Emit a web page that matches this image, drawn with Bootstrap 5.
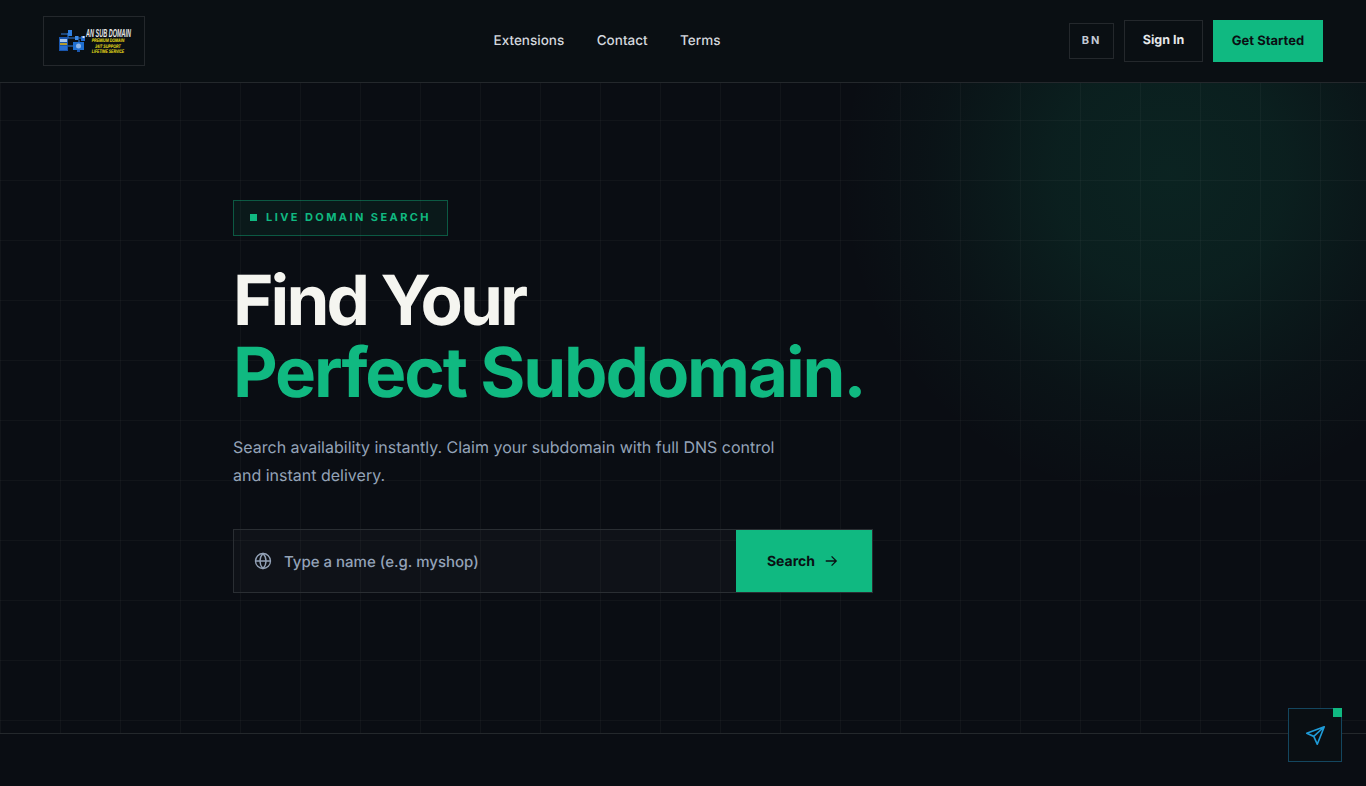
<!DOCTYPE html>
<html lang="en">

<head>
    <meta charset="UTF-8">
    <meta name="viewport" content="width=device-width, initial-scale=1.0">
    <title>AN Sub Domain</title>
    <link href="https://cdn.jsdelivr.net/npm/bootstrap@5.3.0/dist/css/bootstrap.min.css" rel="stylesheet">
    <style>
        body {
            background-color: #0a0d13;
            color: #f4f4ef;
            font-family: Inter, "Liberation Sans", sans-serif;
            text-rendering: geometricPrecision;
            height: 786px;
            overflow: hidden;
        }

        /* Header */
        .site-head {
            height: 83px;
            padding: 0 43px;
            background-color: #0a0f13;
            border-bottom: 1px solid #24282c;
        }

        .logo-box {
            width: 102px;
            height: 50px;
            border: 1px solid #24282c;
        }

        .head-link {
            color: #d4d8de;
            font-size: 13.5px;
            font-weight: 500;
            text-decoration: none;
        }

        .head-links {
            gap: 32.500px;
        }

        .head-actions {
            gap: 10px;
        }

        .lang-btn {
            width: 45px;
            height: 36px;
            padding-bottom: 2px;
            border: 1px solid #24282c;
            color: #c4cad6;
            font-size: 11px;
            font-weight: 700;
            letter-spacing: 2px;
        }

        .signin-btn {
            width: 79px;
            height: 42px;
            padding-top: 1px;
            border: 1px solid #24282c;
            color: #e6e8ea;
            font-size: 12.500px;
            font-weight: 650;
        }

        .start-btn {
            width: 110px;
            height: 42px;
            padding-top: 1px;
            background-color: #10b981;
            color: #0a0f13;
            font-size: 13px;
            font-weight: 650;
        }

        /* Hero */
        .hero-area {
            height: 651px;
            padding-top: 117px;
            background-color: #0a0d13;
            background-image:
                linear-gradient(rgba(255, 255, 255, .032) 1px, transparent 1px),
                linear-gradient(90deg, rgba(255, 255, 255, .032) 1px, transparent 1px),
                radial-gradient(circle 330px at 1170px 90px, rgba(16, 185, 129, .13), rgba(16, 185, 129, .105) 35%, rgba(16, 185, 129, .035) 72%, transparent 100%);
            background-size: 60px 60px, 60px 60px, 100% 100%;
            background-position: 0 -23px, 0 0, 0 0;
            border-bottom: 1px solid #24282c;
        }

        .hero-inner {
            width: 900px;
            margin: 0 auto;
        }

        .live-tag {
            width: 215px;
            height: 36px;
            padding: 0 0 2px 16px;
            gap: 9px;
            background-color: rgba(16, 185, 129, .07);
            border: 1px solid rgba(16, 185, 129, .4);
            color: #10b981;
            font-size: 11px;
            font-weight: 700;
            letter-spacing: 2.42px;
        }

        .live-dot {
            width: 7px;
            height: 7px;
            background-color: #10b981;
        }

        .hero-title {
            margin: 28px 0 0;
            font-family: Inter, "Liberation Sans", sans-serif;
            font-size: 69px;
            font-weight: 700;
            line-height: 72px;
            letter-spacing: -2.9px;
            color: #f5f5f0;
        }

        .hero-title span {
            color: #10b981;
            letter-spacing: -2.1px;
        }

        .hero-sub {
            margin: 25px 0 0;
            color: #94a3b8;
            font-size: 16px;
            line-height: 28px;
        }

        .search-bar {
            width: 640px;
            height: 64px;
            margin-top: 40px;
            background-color: rgba(255, 255, 255, .025);
            border: 1px solid #2a2e33;
        }

        .search-field {
            padding-left: 20px;
            gap: 12px;
            color: #94a3b8;
            font-size: 15px;
            font-weight: 500;
        }

        .search-field span {
            padding-top: 2px;
        }

        .search-btn {
            width: 136px;
            padding-right: 3px;
            background-color: #10b981;
            color: #0a0f13;
            font-size: 14px;
            font-weight: 650;
            gap: 9px;
        }

        /* Floating telegram button */
        .chat-btn {
            position: absolute;
            right: 24px;
            bottom: 24px;
            width: 54px;
            height: 54px;
            background-color: #0a0f13;
            border: 1px solid #14465f;
        }

        .chat-dot {
            position: absolute;
            top: -1px;
            right: -1px;
            width: 9px;
            height: 9px;
            background-color: #10b981;
        }
    </style>
</head>

<body>
    <header class="site-head d-flex align-items-center justify-content-between">
        <a class="logo-box d-block" href="#">
            <svg class="d-block" width="100" height="48" viewBox="0 0 100 48">
                <path d="M24 16v5h7M33 21h5M35 23v3M24 29h5M17 17h7" stroke="#2f7fe0" fill="none"/>
                <rect x="15" y="20" width="9" height="14" fill="#1a56ad"/>
                <rect x="16" y="22" width="7" height="3" fill="#a8c6ec"/>
                <rect x="16" y="26" width="7" height="2" fill="#b59a2e"/>
                <rect x="16" y="29" width="7" height="4" fill="#2a6fd0"/>
                <rect x="24" y="13" width="4" height="6" fill="#2f7fe0"/>
                <rect x="31" y="19" width="3.500" height="4" fill="#3d8be8"/>
                <rect x="37" y="19" width="4" height="5" fill="#2369c8"/>
                <rect x="38.500" y="19" width="2" height="2" fill="#d8e4f4"/>
                <rect x="29" y="25" width="11" height="8" fill="#1f6fd0"/>
                <circle cx="34.500" cy="29" r="2.500" fill="#8fb6e8"/>
                <rect x="33" y="33" width="3" height="2" fill="#1a56ad"/>
                <g font-family="'Liberation Sans', sans-serif" text-anchor="middle" font-style="italic" font-weight="700">
                    <text transform="translate(64.500 20) scale(.55 1.15)" font-size="10" fill="#e8e8e8">AN SUB DOMAIN</text>
                    <g font-size="5" fill="#f2e01a">
                        <text transform="translate(64 25) scale(.72 1)">PREMIUM DOMAIN</text>
                        <text transform="translate(64 30.500) scale(.72 1)">24/7 SUPPORT</text>
                        <text transform="translate(64 36) scale(.7 1)">LIFETIME SERVICE</text>
                    </g>
                </g>
            </svg>
        </a>
        <nav class="head-links d-flex">
            <a class="head-link" href="#">Extensions</a>
            <a class="head-link" href="#">Contact</a>
            <a class="head-link" href="#">Terms</a>
        </nav>
        <div class="head-actions d-flex align-items-center">
            <span class="lang-btn d-flex align-items-center justify-content-center">BN</span>
            <span class="signin-btn d-flex align-items-center justify-content-center">Sign In</span>
            <span class="start-btn d-flex align-items-center justify-content-center">Get Started</span>
        </div>
    </header>

    <main class="hero-area">
        <div class="hero-inner">
            <div class="live-tag d-flex align-items-center"><i class="live-dot"></i>LIVE DOMAIN SEARCH</div>
            <h1 class="hero-title">Find Your<br><span>Perfect Subdomain.</span></h1>
            <p class="hero-sub">Search availability instantly. Claim your subdomain with full DNS control<br>and instant delivery.</p>
            <div class="search-bar d-flex">
                <div class="search-field d-flex align-items-center flex-grow-1">
                    <svg width="18" height="18" viewBox="0 0 24 24" fill="none" stroke="currentColor" stroke-width="1.8">
                        <circle cx="12" cy="12" r="10"/>
                        <path d="M2 12h20M12 2c3 3 4 6.500 4 10s-1 7-4 10c-3-3-4-6.500-4-10s1-7 4-10z"/>
                    </svg>
                    <span>Type a name (e.g. myshop)</span>
                </div>
                <div class="search-btn d-flex align-items-center justify-content-center">
                    <span>Search</span>
                    <svg width="14" height="14" viewBox="0 0 24 24" fill="none" stroke="currentColor" stroke-width="2.2">
                        <path d="M3 12h18M13 4l8 8-8 8"/>
                    </svg>
                </div>
            </div>
        </div>
    </main>

    <a class="chat-btn d-flex align-items-center justify-content-center" href="#">
        <svg width="21" height="21" viewBox="0 0 24 24" fill="none" stroke="#1f9bd7" stroke-width="1.900" stroke-linejoin="round">
            <path d="M22 2 2 9.500l8 3.500 4 9zM22 2 10 13"/>
        </svg>
        <i class="chat-dot"></i>
    </a>

    <script src="https://cdn.jsdelivr.net/npm/bootstrap@5.3.0/dist/js/bootstrap.bundle.min.js"></script>
</body>

</html>
